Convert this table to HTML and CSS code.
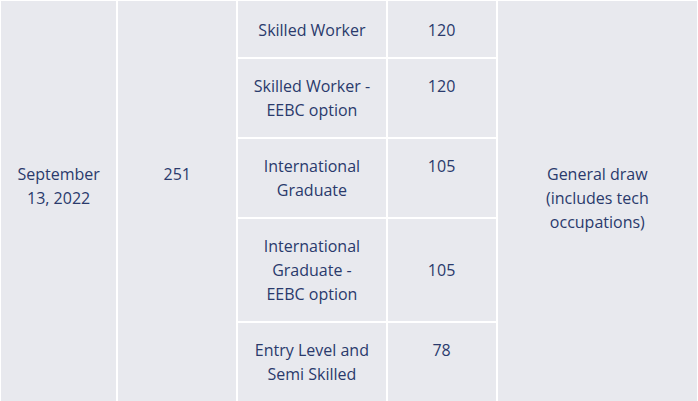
FILE: index.html
```html
<!DOCTYPE html>
<html lang="en">
<head>
<meta charset="utf-8">
<title>Draw table</title>
<link rel="stylesheet" href="styles.css">
</head>
<body>
<table class="draws">
  <colgroup>
    <col class="c-date">
    <col class="c-total">
    <col class="c-cat">
    <col class="c-score">
    <col class="c-note">
  </colgroup>
  <tbody>
    <tr class="first">
      <td rowspan="5" class="span">September 13, 2022</td>
      <td rowspan="5" class="span">251</td>
      <td>Skilled Worker</td>
      <td>120</td>
      <td rowspan="5" class="span">General draw (includes tech occupations)</td>
    </tr>
    <tr>
      <td>Skilled Worker - EEBC option</td>
      <td>120</td>
    </tr>
    <tr>
      <td>International Graduate</td>
      <td>105</td>
    </tr>
    <tr class="mid">
      <td>International Graduate - EEBC option</td>
      <td>105</td>
    </tr>
    <tr>
      <td>Entry Level and Semi Skilled</td>
      <td>78</td>
    </tr>
  </tbody>
</table>
</body>
</html>
```
FILE: styles.css
```css
html, body {
  margin: 0;
  padding: 0;
  background: #ffffff;
}
body {
  font-family: "Open Sans", "Noto Sans", sans-serif;
  font-size: 16px;
  line-height: 24px;
  color: #2a3a6c;
  overflow: hidden;
}
.draws {
  border-collapse: separate;
  border-spacing: 2px;
  margin: -1px 0 0 -1px;
  table-layout: fixed;
  width: 700px;
}
.c-date { width: 115px; }
.c-total { width: 118px; }
.c-cat { width: 147px; }
.c-score { width: 108px; }
.c-note { width: 199px; }
.draws td {
  background: #e8e9ee;
  text-align: center;
  vertical-align: top;
  padding: 15px 15px;
}
.draws tr.first td {
  padding-top: 17px;
}
.draws tr.mid td {
  vertical-align: middle;
}
.draws td.span,
.draws tr.first td.span {
  padding-top: 161px;
}
```
